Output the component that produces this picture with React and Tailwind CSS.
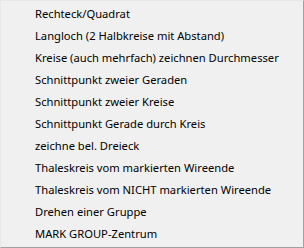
const items = [
  'Rechteck/Quadrat',
  'Langloch (2 Halbkreise mit Abstand)',
  'Kreise (auch mehrfach) zeichnen Durchmesser',
  'Schnittpunkt zweier Geraden',
  'Schnittpunkt zweier Kreise',
  'Schnittpunkt Gerade durch Kreis',
  'zeichne bel. Dreieck',
  'Thaleskreis vom markierten Wireende',
  'Thaleskreis vom NICHT markierten Wireende',
  'Drehen einer Gruppe',
  'MARK GROUP-Zentrum',
];

const App = () => {
  return (
    <div
      className="w-[304px] h-[248px] bg-[#f0f0f0] border border-t-[#e8e8e8] border-l-[#e8e8e8] border-r-[#a0a0a0] border-b-[#a0a0a0] py-[2px] text-black text-[11.2px]"
      style={{ fontFamily: '"Noto Sans", "Open Sans", sans-serif' }}
    >
      {items.map((label) => (
        <div key={label} className="h-[22px] flex items-center pl-[34px] whitespace-nowrap">
          {label}
        </div>
      ))}
    </div>
  );
};

export default App;
